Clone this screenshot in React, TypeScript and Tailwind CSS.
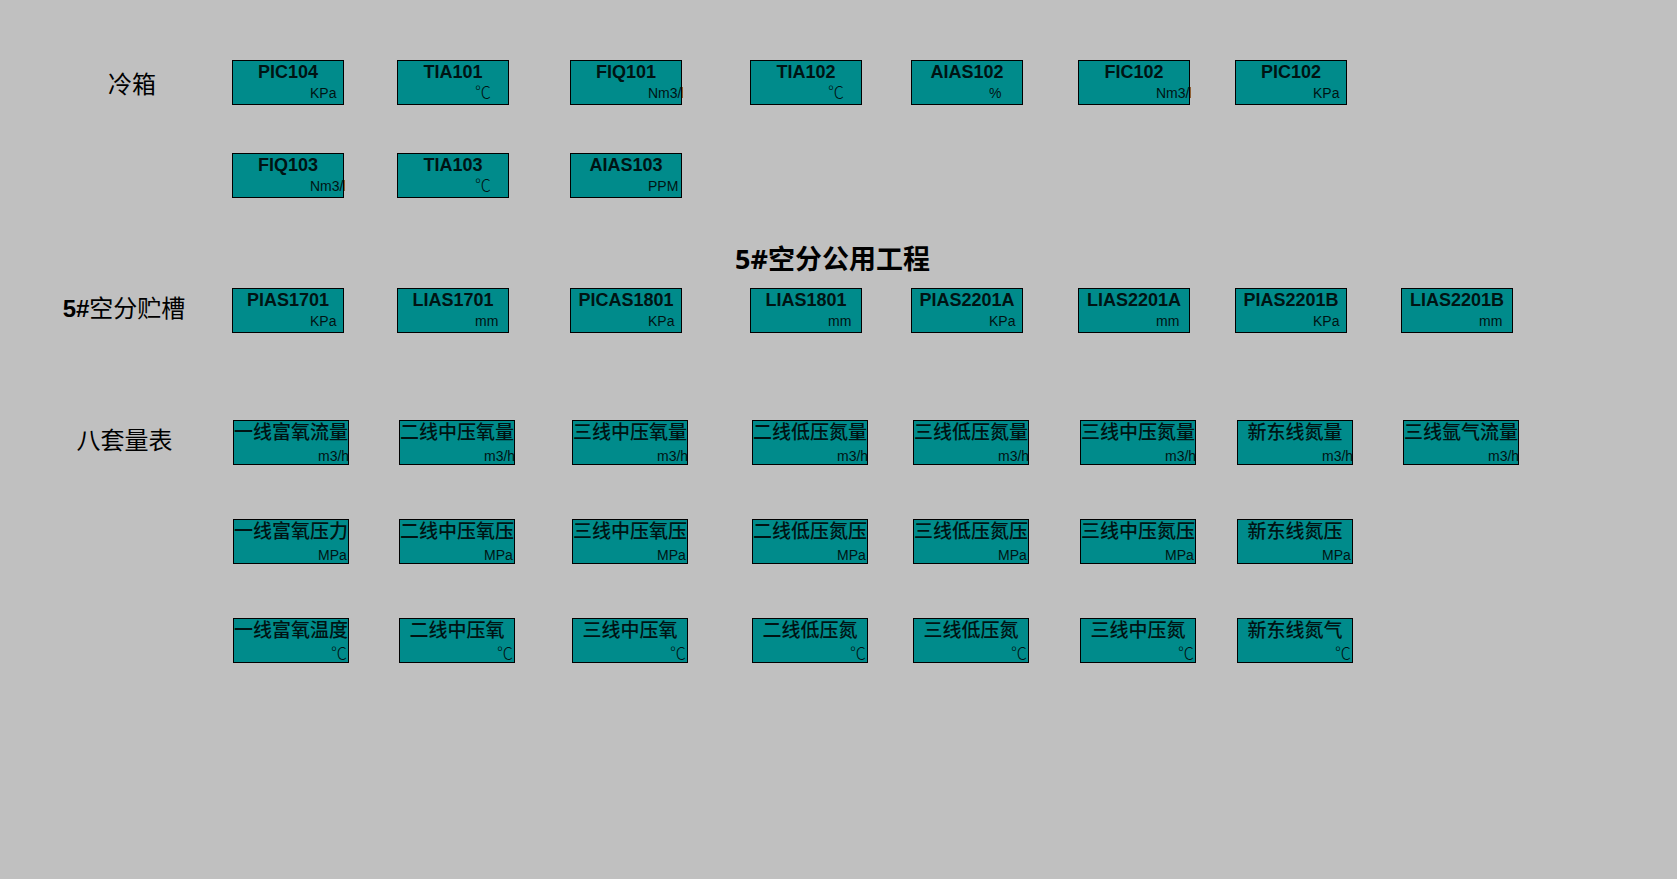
import type { ReactNode } from "react";

type Tag = { name: string; unit: string };

const tags = (...items: string[]): Tag[] =>
  items.map((item) => {
    const [name, unit] = item.split("|");
    return { name, unit };
  });

const coldBoxA = tags("PIC104|KPa", "TIA101|℃", "FIQ101|Nm3/h", "TIA102|℃", "AIAS102|%", "FIC102|Nm3/h", "PIC102|KPa");
const coldBoxB = tags("FIQ103|Nm3/h", "TIA103|℃", "AIAS103|PPM");
const tanks = tags(
  "PIAS1701|KPa",
  "LIAS1701|mm",
  "PICAS1801|KPa",
  "LIAS1801|mm",
  "PIAS2201A|KPa",
  "LIAS2201A|mm",
  "PIAS2201B|KPa",
  "LIAS2201B|mm",
);
const flows = tags(
  "一线富氧流量|m3/h",
  "二线中压氧量|m3/h",
  "三线中压氧量|m3/h",
  "二线低压氮量|m3/h",
  "三线低压氮量|m3/h",
  "三线中压氮量|m3/h",
  "新东线氮量|m3/h",
  "三线氩气流量|m3/h",
);
const pressures = tags(
  "一线富氧压力|MPa",
  "二线中压氧压|MPa",
  "三线中压氧压|MPa",
  "二线低压氮压|MPa",
  "三线低压氮压|MPa",
  "三线中压氮压|MPa",
  "新东线氮压|MPa",
);
const temperatures = tags(
  "一线富氧温度|℃",
  "二线中压氧|℃",
  "三线中压氧|℃",
  "二线低压氮|℃",
  "三线低压氮|℃",
  "三线中压氮|℃",
  "新东线氮气|℃",
);

const narrowRow =
  "grid grid-cols-[232fr_165fr_173fr_180fr_161fr_167fr_157fr_166fr_276fr]";
const wideRow =
  "grid grid-cols-[233fr_166fr_173fr_180fr_161fr_167fr_157fr_166fr_274fr]";

function Unit({ unit, className }: { unit: string; className: string }) {
  const size = unit === "℃" ? "text-base leading-4 font-light" : "text-sm leading-4";
  return <div className={`overflow-hidden whitespace-nowrap ${size} ${className}`}>{unit}</div>;
}

function NarrowTag({ tag }: { tag: Tag }) {
  return (
    <div className="flex h-[45px] w-28 flex-col gap-[2px] border border-black bg-[#008b8b] text-[#001414]">
      <div className="text-center text-lg leading-[22px] font-bold whitespace-nowrap">{tag.name}</div>
      <Unit unit={tag.unit} className="ml-[77px] w-[35px]" />
    </div>
  );
}

function WideTag({ tag }: { tag: Tag }) {
  return (
    <div className="flex h-[45px] w-[116px] flex-col justify-between border border-black bg-[#008b8b] text-[#001414]">
      <div className="flex justify-center text-[19px] leading-6 font-medium whitespace-nowrap">{tag.name}</div>
      <Unit unit={tag.unit} className={tag.unit === "℃" ? "ml-[97px]" : "ml-[84px]"} />
    </div>
  );
}

function Row({ tags, wide = false, children }: { tags: Tag[]; wide?: boolean; children?: ReactNode }) {
  return (
    <div className={wide ? wideRow : narrowRow}>
      <div className="flex items-center justify-center">{children}</div>
      {tags.map((tag) => (wide ? <WideTag key={tag.name} tag={tag} /> : <NarrowTag key={tag.name} tag={tag} />))}
    </div>
  );
}

export default function App() {
  return (
    <main className="min-h-screen bg-[#c0c0c0] pt-[60px] pb-10 font-['Liberation_Sans','Noto_Sans_CJK_SC',sans-serif] text-black">
      <section className="flex flex-col gap-12">
        <Row tags={coldBoxA}>
          <h2 className="pt-1 pl-8 text-2xl leading-8">冷箱</h2>
        </Row>
        <Row tags={coldBoxB} />
      </section>

      <h1 className="mt-[41px] pr-3 text-center font-['Open_Sans','Noto_Sans_CJK_SC',sans-serif] text-[27px] leading-10 font-bold">
        5#空分公用工程
      </h1>

      <section className="mt-[9px]">
        <Row tags={tanks}>
          <h2 className="pb-1 pl-4 text-2xl leading-8">
            <span className="font-bold">5#</span>空分贮槽
          </h2>
        </Row>
      </section>

      <section className="mt-[87px] flex flex-col gap-[54px]">
        <Row tags={flows} wide>
          <h2 className="pb-1 pl-4 text-2xl leading-8">八套量表</h2>
        </Row>
        <Row tags={pressures} wide />
        <Row tags={temperatures} wide />
      </section>
    </main>
  );
}
